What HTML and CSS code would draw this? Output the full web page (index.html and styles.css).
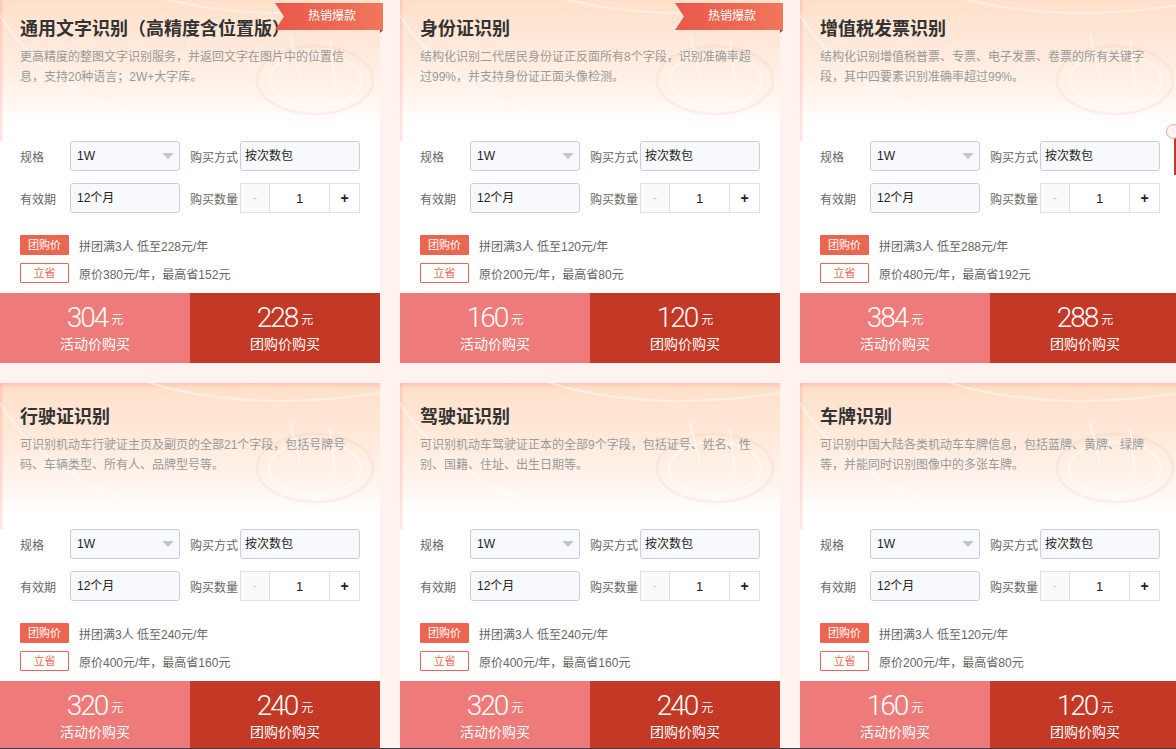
FILE: index.html
```html
<!DOCTYPE html>
<html lang="zh-CN">
<head>
<meta charset="utf-8">
<title>文字识别</title>
<link rel="stylesheet" href="styles.css">
</head>
<body>
<div class="grid">

  <div class="card">
    <div class="head">
      <svg class="deco" viewBox="0 0 380 146" width="380" height="146"><path d="M0 20 Q60 120 250 150" /><path d="M150 0 Q250 30 380 10" /><ellipse cx="315" cy="85" rx="58" ry="34" /><ellipse cx="315" cy="85" rx="46" ry="26" class="in" /><path d="M290 40 L300 80 M330 45 L335 90" class="in" /></svg>
      <h3 class="title">通用文字识别（高精度含位置版）</h3>
      <p class="desc">更高精度的整图文字识别服务，并返回文字在图片中的位置信息，支持20种语言；2W+大字库。</p>
      <span class="ribbon"><span class="rtext">热销爆款</span></span>
    </div>
    <div class="form">
      <div class="row"><span class="lbl">规格</span><div class="field sel">1W<i class="arrow"></i></div><span class="lbl lbl2">购买方式</span><div class="field wide">按次数包</div></div>
      <div class="row"><span class="lbl">有效期</span><div class="field sel">12个月</div><span class="lbl lbl2">购买数量</span><div class="qty"><span class="minus">-</span><span class="num">1</span><span class="plus">+</span></div></div>
    </div>
    <div class="promo">
      <div class="prow"><span class="tag fill">团购价</span>拼团满3人 低至228元/年</div>
      <div class="prow"><span class="tag line">立省</span>原价380元/年，最高省152元</div>
    </div>
    <div class="buy">
      <a class="btn act"><span class="price"><b>304</b><small>元</small></span><span class="bl">活动价购买</span></a>
      <a class="btn grp"><span class="price"><b>228</b><small>元</small></span><span class="bl">团购价购买</span></a>
    </div>
  </div>

  <div class="card">
    <div class="head">
      <svg class="deco" viewBox="0 0 380 146" width="380" height="146"><path d="M0 20 Q60 120 250 150" /><path d="M150 0 Q250 30 380 10" /><ellipse cx="315" cy="85" rx="58" ry="34" /><ellipse cx="315" cy="85" rx="46" ry="26" class="in" /><path d="M290 40 L300 80 M330 45 L335 90" class="in" /></svg>
      <h3 class="title">身份证识别</h3>
      <p class="desc">结构化识别二代居民身份证正反面所有8个字段，识别准确率超过99%，并支持身份证正面头像检测。</p>
      <span class="ribbon"><span class="rtext">热销爆款</span></span>
    </div>
    <div class="form">
      <div class="row"><span class="lbl">规格</span><div class="field sel">1W<i class="arrow"></i></div><span class="lbl lbl2">购买方式</span><div class="field wide">按次数包</div></div>
      <div class="row"><span class="lbl">有效期</span><div class="field sel">12个月</div><span class="lbl lbl2">购买数量</span><div class="qty"><span class="minus">-</span><span class="num">1</span><span class="plus">+</span></div></div>
    </div>
    <div class="promo">
      <div class="prow"><span class="tag fill">团购价</span>拼团满3人 低至120元/年</div>
      <div class="prow"><span class="tag line">立省</span>原价200元/年，最高省80元</div>
    </div>
    <div class="buy">
      <a class="btn act"><span class="price"><b>160</b><small>元</small></span><span class="bl">活动价购买</span></a>
      <a class="btn grp"><span class="price"><b>120</b><small>元</small></span><span class="bl">团购价购买</span></a>
    </div>
  </div>

  <div class="card">
    <div class="head">
      <svg class="deco" viewBox="0 0 380 146" width="380" height="146"><path d="M0 20 Q60 120 250 150" /><path d="M150 0 Q250 30 380 10" /><ellipse cx="315" cy="85" rx="58" ry="34" /><ellipse cx="315" cy="85" rx="46" ry="26" class="in" /><path d="M290 40 L300 80 M330 45 L335 90" class="in" /></svg>
      <h3 class="title">增值税发票识别</h3>
      <p class="desc">结构化识别增值税普票、专票、电子发票、卷票的所有关键字段，其中四要素识别准确率超过99%。</p>
    </div>
    <div class="form">
      <div class="row"><span class="lbl">规格</span><div class="field sel">1W<i class="arrow"></i></div><span class="lbl lbl2">购买方式</span><div class="field wide">按次数包</div></div>
      <div class="row"><span class="lbl">有效期</span><div class="field sel">12个月</div><span class="lbl lbl2">购买数量</span><div class="qty"><span class="minus">-</span><span class="num">1</span><span class="plus">+</span></div></div>
    </div>
    <div class="promo">
      <div class="prow"><span class="tag fill">团购价</span>拼团满3人 低至288元/年</div>
      <div class="prow"><span class="tag line">立省</span>原价480元/年，最高省192元</div>
    </div>
    <div class="buy">
      <a class="btn act"><span class="price"><b>384</b><small>元</small></span><span class="bl">活动价购买</span></a>
      <a class="btn grp"><span class="price"><b>288</b><small>元</small></span><span class="bl">团购价购买</span></a>
    </div>
  </div>

  <div class="card">
    <div class="head">
      <svg class="deco" viewBox="0 0 380 146" width="380" height="146"><path d="M0 20 Q60 120 250 150" /><path d="M150 0 Q250 30 380 10" /><ellipse cx="315" cy="85" rx="58" ry="34" /><ellipse cx="315" cy="85" rx="46" ry="26" class="in" /><path d="M290 40 L300 80 M330 45 L335 90" class="in" /></svg>
      <h3 class="title">行驶证识别</h3>
      <p class="desc">可识别机动车行驶证主页及副页的全部21个字段，包括号牌号码、车辆类型、所有人、品牌型号等。</p>
    </div>
    <div class="form">
      <div class="row"><span class="lbl">规格</span><div class="field sel">1W<i class="arrow"></i></div><span class="lbl lbl2">购买方式</span><div class="field wide">按次数包</div></div>
      <div class="row"><span class="lbl">有效期</span><div class="field sel">12个月</div><span class="lbl lbl2">购买数量</span><div class="qty"><span class="minus">-</span><span class="num">1</span><span class="plus">+</span></div></div>
    </div>
    <div class="promo">
      <div class="prow"><span class="tag fill">团购价</span>拼团满3人 低至240元/年</div>
      <div class="prow"><span class="tag line">立省</span>原价400元/年，最高省160元</div>
    </div>
    <div class="buy">
      <a class="btn act"><span class="price"><b>320</b><small>元</small></span><span class="bl">活动价购买</span></a>
      <a class="btn grp"><span class="price"><b>240</b><small>元</small></span><span class="bl">团购价购买</span></a>
    </div>
  </div>

  <div class="card">
    <div class="head">
      <svg class="deco" viewBox="0 0 380 146" width="380" height="146"><path d="M0 20 Q60 120 250 150" /><path d="M150 0 Q250 30 380 10" /><ellipse cx="315" cy="85" rx="58" ry="34" /><ellipse cx="315" cy="85" rx="46" ry="26" class="in" /><path d="M290 40 L300 80 M330 45 L335 90" class="in" /></svg>
      <h3 class="title">驾驶证识别</h3>
      <p class="desc">可识别机动车驾驶证正本的全部9个字段，包括证号、姓名、性别、国籍、住址、出生日期等。</p>
    </div>
    <div class="form">
      <div class="row"><span class="lbl">规格</span><div class="field sel">1W<i class="arrow"></i></div><span class="lbl lbl2">购买方式</span><div class="field wide">按次数包</div></div>
      <div class="row"><span class="lbl">有效期</span><div class="field sel">12个月</div><span class="lbl lbl2">购买数量</span><div class="qty"><span class="minus">-</span><span class="num">1</span><span class="plus">+</span></div></div>
    </div>
    <div class="promo">
      <div class="prow"><span class="tag fill">团购价</span>拼团满3人 低至240元/年</div>
      <div class="prow"><span class="tag line">立省</span>原价400元/年，最高省160元</div>
    </div>
    <div class="buy">
      <a class="btn act"><span class="price"><b>320</b><small>元</small></span><span class="bl">活动价购买</span></a>
      <a class="btn grp"><span class="price"><b>240</b><small>元</small></span><span class="bl">团购价购买</span></a>
    </div>
  </div>

  <div class="card">
    <div class="head">
      <svg class="deco" viewBox="0 0 380 146" width="380" height="146"><path d="M0 20 Q60 120 250 150" /><path d="M150 0 Q250 30 380 10" /><ellipse cx="315" cy="85" rx="58" ry="34" /><ellipse cx="315" cy="85" rx="46" ry="26" class="in" /><path d="M290 40 L300 80 M330 45 L335 90" class="in" /></svg>
      <h3 class="title">车牌识别</h3>
      <p class="desc">可识别中国大陆各类机动车车牌信息，包括蓝牌、黄牌、绿牌等，并能同时识别图像中的多张车牌。</p>
    </div>
    <div class="form">
      <div class="row"><span class="lbl">规格</span><div class="field sel">1W<i class="arrow"></i></div><span class="lbl lbl2">购买方式</span><div class="field wide">按次数包</div></div>
      <div class="row"><span class="lbl">有效期</span><div class="field sel">12个月</div><span class="lbl lbl2">购买数量</span><div class="qty"><span class="minus">-</span><span class="num">1</span><span class="plus">+</span></div></div>
    </div>
    <div class="promo">
      <div class="prow"><span class="tag fill">团购价</span>拼团满3人 低至120元/年</div>
      <div class="prow"><span class="tag line">立省</span>原价200元/年，最高省80元</div>
    </div>
    <div class="buy">
      <a class="btn act"><span class="price"><b>160</b><small>元</small></span><span class="bl">活动价购买</span></a>
      <a class="btn grp"><span class="price"><b>120</b><small>元</small></span><span class="bl">团购价购买</span></a>
    </div>
  </div>

</div>
<div class="side-bar"></div>
<div class="side-dot"></div>
<div class="bottom-line"></div>
</body>
</html>
```

FILE: styles.css
```css
html, body {
  margin: 0;
  padding: 0;
  height: 100%;
  overflow: hidden;
}
body {
  background: #fff3f0;
  font-family: "Liberation Sans", "Noto Sans CJK SC", sans-serif;
  font-size: 12px;
  color: #666;
}
.grid {
  display: grid;
  grid-template-columns: repeat(3, 380px);
  column-gap: 20px;
  row-gap: 20px;
  margin-top: -5px;
  width: 1180px;
}
.card {
  position: relative;
  background: #fff;
  height: 368px;
  display: flex;
  flex-direction: column;
}
.head {
  position: relative;
  height: 146px;
  box-sizing: border-box;
  padding: 21px 27px 0 20px;
  background:
    linear-gradient(90deg, rgba(255,150,135,.35) 0, rgba(255,170,150,0) 4px),
    linear-gradient(180deg, rgba(255,160,140,.4) 0, rgba(255,170,150,0) 6px),
    linear-gradient(180deg, #ffe0c9 0%, #ffeadc 40%, #fff6f0 72%, #ffffff 88%);
}
.deco {
  position: absolute;
  left: 0;
  top: 0;
  pointer-events: none;
  fill: none;
  stroke: rgba(255,255,255,.45);
  stroke-width: 2;
}
.deco ellipse {
  stroke: rgba(225,195,185,.18);
  stroke-width: 3;
}
.deco .in {
  stroke: rgba(255,255,255,.5);
  stroke-width: 2;
}
.title {
  position: relative;
  margin: 0;
  font-size: 18px;
  line-height: 26px;
  font-weight: bold;
  color: #333;
}
.desc {
  position: relative;
  margin: 5px 0 0;
  line-height: 20px;
  color: #999;
  font-size: 12px;
}
.ribbon {
  position: absolute;
  right: -3px;
  top: 8px;
  width: 108px;
  height: 27px;
}
.rtext {
  display: block;
  height: 27px;
  line-height: 27px;
  padding-left: 6px;
  box-sizing: border-box;
  text-align: center;
  color: #fff;
  font-size: 12px;
  background: linear-gradient(90deg, #e9584b, #f1765a);
  clip-path: polygon(0 0, 100% 0, 100% 100%, 0 100%, 9px 50%);
}
.ribbon::after {
  content: "";
  position: absolute;
  right: 0;
  top: 27px;
  width: 0;
  height: 0;
  border-top: 3px solid #a8352a;
  border-right: 3px solid transparent;
}
.form {
  padding: 0 20px;
  display: flex;
  flex-direction: column;
  gap: 12px;
}
.row {
  display: flex;
  align-items: center;
  height: 30px;
}
.lbl {
  width: 50px;
  color: #666;
  white-space: nowrap;
}
.lbl2 {
  margin-left: 10px;
}
.field {
  position: relative;
  box-sizing: border-box;
  height: 30px;
  line-height: 29px;
  border: 1px solid #c8cee0;
  border-radius: 3px;
  background: #f8f9fc;
  color: #222;
  padding-left: 6px;
}
.sel {
  width: 110px;
}
.wide {
  width: 120px;
  padding-left: 4px;
}
.arrow {
  position: absolute;
  right: 5px;
  top: 11px;
  width: 0;
  height: 0;
  border-left: 6px solid transparent;
  border-right: 6px solid transparent;
  border-top: 6px solid #c3c7d1;
}
.qty {
  display: flex;
  width: 120px;
  height: 30px;
  box-sizing: border-box;
  border: 1px solid #e1e1e1;
}
.qty span {
  display: flex;
  align-items: center;
  justify-content: center;
}
.minus {
  width: 28px;
  background: #fafafa;
  color: #ccc;
  border-right: 1px solid #e1e1e1;
}
.num {
  flex: 1;
  color: #222;
  font-size: 13px;
  border-right: 1px solid #e1e1e1;
}
.plus {
  width: 29px;
  color: #222;
  font-size: 14px;
  font-weight: bold;
}
.promo {
  padding: 22px 20px 0;
  display: flex;
  flex-direction: column;
  gap: 8px;
}
.prow {
  display: flex;
  align-items: center;
  height: 20px;
  color: #666;
}
.tag {
  box-sizing: border-box;
  width: 49px;
  height: 20px;
  line-height: 18px;
  text-align: center;
  font-size: 11px;
  border-radius: 1px;
  margin-right: 10px;
  border: 1px solid #ec6552;
}
.tag.fill {
  background: #ec6552;
  color: #fff;
}
.tag.line {
  background: #fff;
  color: #ec6552;
}
.buy {
  margin-top: auto;
  display: flex;
  height: 70px;
}
.btn {
  flex: 1;
  display: flex;
  flex-direction: column;
  align-items: center;
  padding-top: 10px;
  box-sizing: border-box;
  color: #fff;
  cursor: pointer;
}
.btn.act {
  background: #ee7a79;
}
.btn.grp {
  background: #c43826;
}
.price {
  display: flex;
  align-items: center;
  height: 30px;
}
.price b {
  font-family: "Roboto", "Liberation Sans", sans-serif;
  font-weight: 300;
  font-size: 28px;
  letter-spacing: -2px;
  line-height: 30px;
}
.price small {
  font-size: 12px;
  margin-left: 4px;
  margin-top: 1px;
}
.bl {
  font-size: 14px;
  line-height: 22px;
}
.side-bar {
  position: fixed;
  left: 1174px;
  top: 127px;
  width: 6px;
  height: 48px;
  background: #c9352c;
}
.side-dot {
  position: fixed;
  left: 1166px;
  top: 124px;
  width: 13px;
  height: 13px;
  border: 1.5px solid #e7a39b;
  border-radius: 50%;
  background: #fff4f2;
}
.bottom-line {
  position: fixed;
  left: 0;
  right: 0;
  bottom: 0;
  height: 1px;
  background: #3b4046;
}
```
